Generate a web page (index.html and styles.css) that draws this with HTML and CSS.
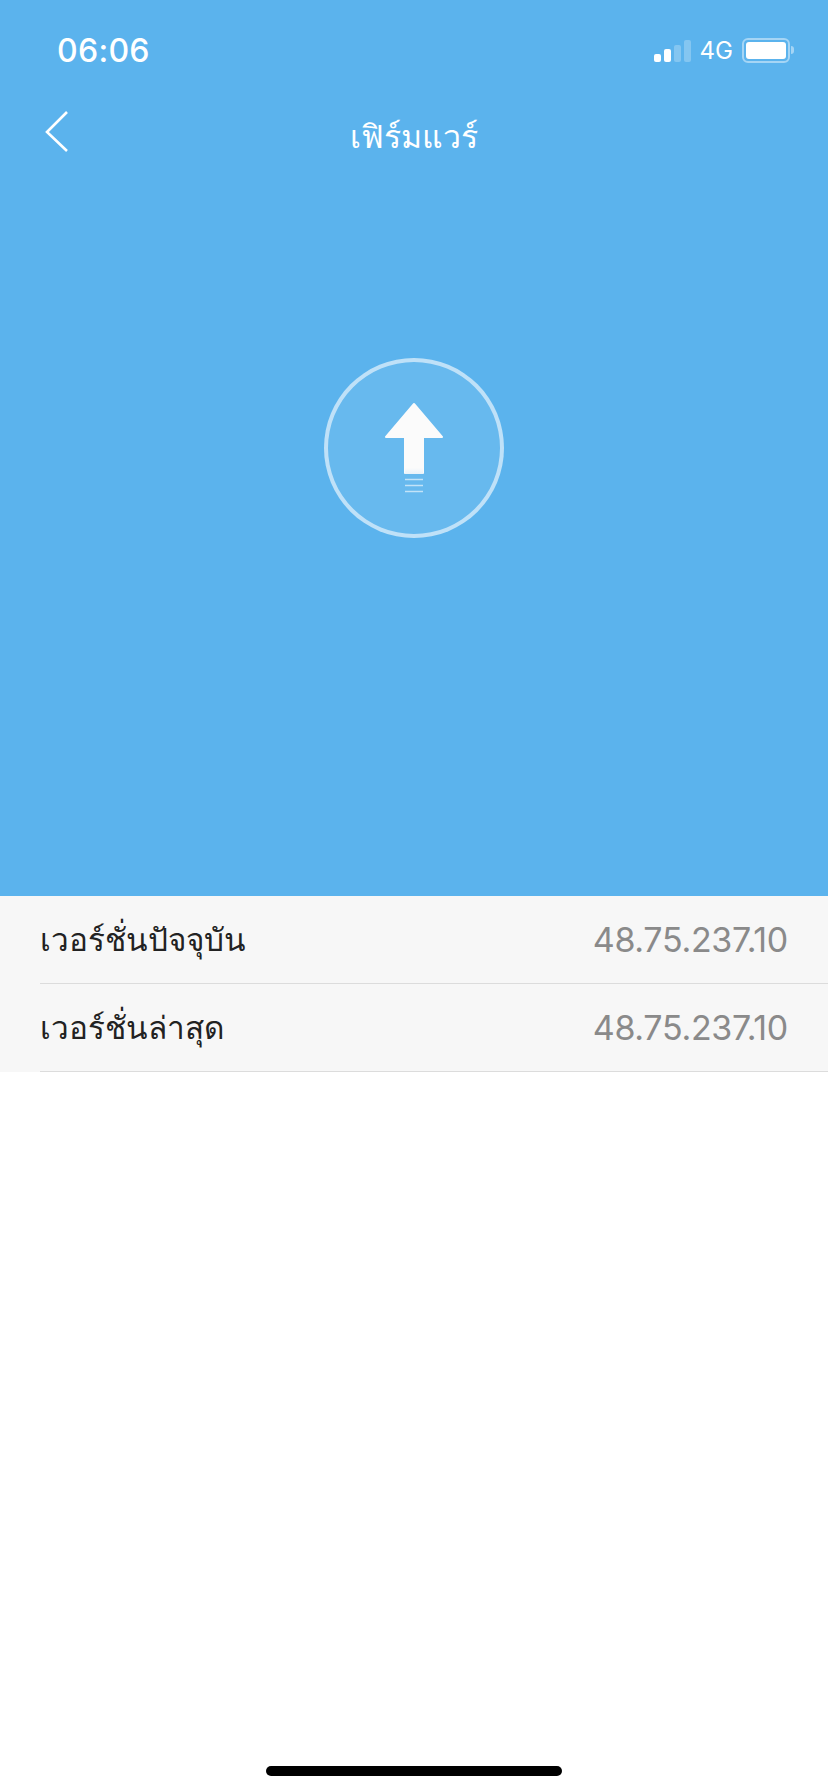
FILE: index.html
```html
<!DOCTYPE html>
<html lang="th">
<head>
<meta charset="utf-8">
<title>เฟิร์มแวร์</title>
<link rel="stylesheet" href="styles.css">
</head>
<body>
<div class="screen">
  <section class="hero">
    <div class="status">
      <span class="time">06:06</span>
      <div class="status-right">
        <div class="signal"><i class="bar b1"></i><i class="bar b2"></i><i class="bar b3 dim"></i><i class="bar b4 dim"></i></div>
        <span class="net">4G</span>
        <div class="battery"><div class="battery-body"><div class="battery-fill"></div></div><div class="battery-cap"></div></div>
      </div>
    </div>
    <header class="nav">
      <svg class="back" width="28" height="44" viewBox="0 0 28 44"><path d="M25 2 L5 22 L25 41" fill="none" stroke="#fff" stroke-width="2.600"/></svg>
      <h1 class="title">เฟิร์มแวร์</h1>
    </header>
    <div class="badge-wrap">
      <div class="badge">
        <svg width="60" height="92" viewBox="0 0 60 92">
          <defs><linearGradient id="g" x1="0" y1="0" x2="0" y2="1"><stop offset="0.72" stop-color="#fbfbfb"/><stop offset="1" stop-color="#e8f2fa"/></linearGradient></defs>
          <path d="M30 2 L58 35 L39 35 L39 71 L21 71 L21 35 L2 35 Z" fill="#fbfbfb" stroke="#fbfbfb" stroke-width="2" stroke-linejoin="round"/>
          <rect x="21" y="50" width="18" height="22" fill="url(#g)"/>
          <path d="M21 77.500H39M21 83.500H39M21 89.500H39" stroke="#fff" stroke-opacity="0.600" stroke-width="1.500" fill="none"/>
        </svg>
      </div>
    </div>
  </section>
  <section class="list">
    <div class="row"><span class="label">เวอร์ชั่นปัจจุบัน</span><span class="value">48.75.237.10</span></div>
    <div class="row"><span class="label">เวอร์ชั่นล่าสุด</span><span class="value">48.75.237.10</span></div>
  </section>
  <div class="home-wrap"><div class="home"></div></div>
</div>
</body>
</html>
```
FILE: styles.css
```css
* { box-sizing: border-box; }
html, body { margin: 0; padding: 0; background: #fff; }
.screen { width: 828px; height: 1792px; display: flex; flex-direction: column; overflow: hidden; font-family: "Inter", "Liberation Sans", "Noto Sans", sans-serif; }
.hero { height: 896px; background: #5bb3ed; display: flex; flex-direction: column; }
.status { height: 100px; display: flex; justify-content: space-between; align-items: center; padding: 0 34px 0 57px; color: #fff; }
.time { font-size: 32px; font-weight: 500; letter-spacing: 0.3px; }
.status-right { display: flex; align-items: center; }
.signal { display: flex; align-items: flex-end; gap: 3px; height: 24px; }
.bar { display: block; width: 7px; background: #fff; border-radius: 2px; }
.bar.dim { background: rgba(255,255,255,.25); }
.b1 { height: 8px; } .b2 { height: 13px; } .b3 { height: 17px; } .b4 { height: 22px; }
.net { font-size: 24px; margin: 0 9px; }
.battery { display: flex; align-items: center; }
.battery-body { width: 48px; height: 25px; border: 2px solid rgba(255,255,255,.45); border-radius: 6px; padding: 2px; }
.battery-fill { height: 100%; background: #fff; border-radius: 3px; }
.battery-cap { width: 3px; height: 8px; background: rgba(255,255,255,.45); border-radius: 0 3px 3px 0; margin-left: 1px; }
.nav { height: 64px; display: flex; align-items: center; justify-content: center; position: relative; padding-top: 9px; }
.back { position: absolute; left: 42px; top: 10px; }
.title { margin: 0; font-size: 32px; font-weight: 400; color: #fff; }
.badge-wrap { display: flex; justify-content: center; padding-top: 194px; }
.badge { width: 180px; height: 180px; border: 4px solid rgba(255,255,255,.58); border-radius: 50%; background: rgba(255,255,255,.08); display: flex; justify-content: center; align-items: flex-start; padding-top: 40px; }
.list { background: #f7f7f7; height: 176px; }
.row { height: 88px; margin-left: 40px; padding-right: 40px; border-bottom: 1px solid #dcdcdc; display: flex; align-items: center; justify-content: space-between; }
.label { font-size: 31.500px; color: #222; }
.value { font-size: 34px; font-weight: 400; letter-spacing: -0.3px; color: #8a8a8a; }
.home-wrap { flex: 1; display: flex; justify-content: center; align-items: flex-end; padding-bottom: 16px; }
.home { width: 296px; height: 10px; background: #000; border-radius: 5px; }
```
